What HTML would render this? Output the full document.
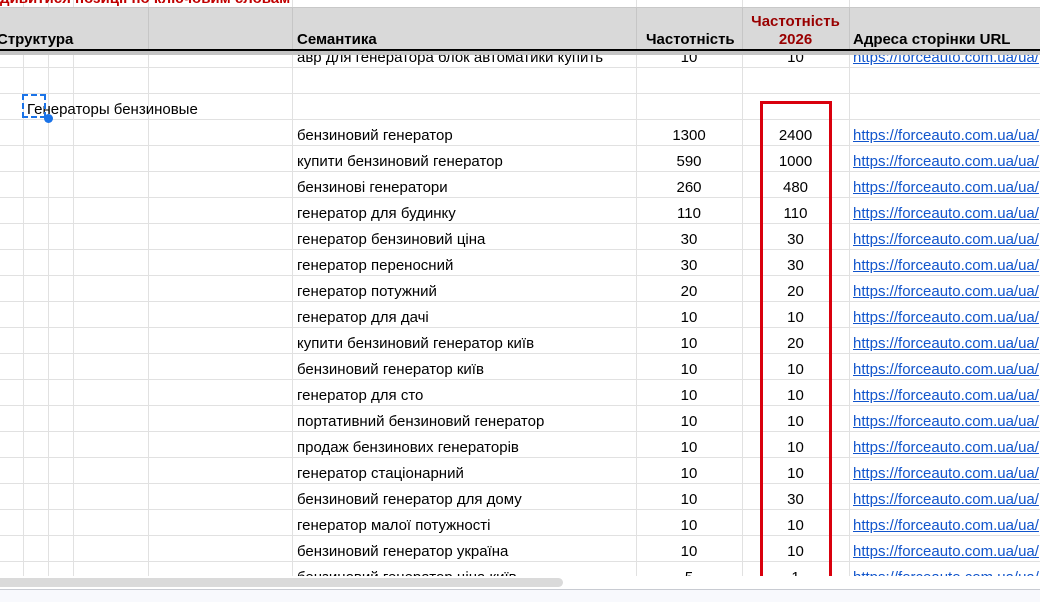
<!DOCTYPE html>
<html><head><meta charset="utf-8"><style>
body{margin:0;width:1040px;height:602px;overflow:hidden;background:#fff;font-family:"Liberation Sans",Arial,sans-serif;font-size:15px;color:#000;position:relative}
.v{position:absolute;top:0;width:1px;height:576px;background:#e1e1e1}
.r{position:absolute;left:0;width:1040px;height:26px;border-bottom:1px solid #e1e1e1;box-sizing:border-box}
.r span{position:absolute;top:7px;white-space:nowrap}
.s{left:297px}.f{left:636px;width:106px;text-align:center}.g{left:742px;width:107px;text-align:center}.u{left:853px;color:#1155cc;text-decoration:underline}
#hd{position:absolute;left:0;top:7px;width:1040px;height:42px;background:#d9d9d9;border-top:1px solid #c8c8c8}
#hd b{position:absolute;top:23px;white-space:nowrap;font-size:15px}
</style></head><body>
<div class="v" style="left:23px"></div><div class="v" style="left:48px"></div><div class="v" style="left:73px"></div><div class="v" style="left:148px"></div><div class="v" style="left:292px"></div><div class="v" style="left:636px"></div><div class="v" style="left:742px"></div><div class="v" style="left:849px"></div>

<div class="r" style="top:42px"><span class="s" style="top:7px">авр для генератора блок автоматики купить</span><span class="f" style="top:7px">10</span><span class="g" style="top:7px">10</span><span class="u" style="top:7px">https://forceauto.com.ua/ua/</span></div>
<div class="r" style="top:68px"></div>
<div class="r" style="top:94px"><span style="left:27px">Генераторы бензиновые</span></div>
<div class="r" style="top:120px"><span class="s">бензиновий генератор</span><span class="f">1300</span><span class="g">2400</span><span class="u">https://forceauto.com.ua/ua/</span></div>
<div class="r" style="top:146px"><span class="s">купити бензиновий генератор</span><span class="f">590</span><span class="g">1000</span><span class="u">https://forceauto.com.ua/ua/</span></div>
<div class="r" style="top:172px"><span class="s">бензинові генератори</span><span class="f">260</span><span class="g">480</span><span class="u">https://forceauto.com.ua/ua/</span></div>
<div class="r" style="top:198px"><span class="s">генератор для будинку</span><span class="f">110</span><span class="g">110</span><span class="u">https://forceauto.com.ua/ua/</span></div>
<div class="r" style="top:224px"><span class="s">генератор бензиновий ціна</span><span class="f">30</span><span class="g">30</span><span class="u">https://forceauto.com.ua/ua/</span></div>
<div class="r" style="top:250px"><span class="s">генератор переносний</span><span class="f">30</span><span class="g">30</span><span class="u">https://forceauto.com.ua/ua/</span></div>
<div class="r" style="top:276px"><span class="s">генератор потужний</span><span class="f">20</span><span class="g">20</span><span class="u">https://forceauto.com.ua/ua/</span></div>
<div class="r" style="top:302px"><span class="s">генератор для дачі</span><span class="f">10</span><span class="g">10</span><span class="u">https://forceauto.com.ua/ua/</span></div>
<div class="r" style="top:328px"><span class="s">купити бензиновий генератор київ</span><span class="f">10</span><span class="g">20</span><span class="u">https://forceauto.com.ua/ua/</span></div>
<div class="r" style="top:354px"><span class="s">бензиновий генератор київ</span><span class="f">10</span><span class="g">10</span><span class="u">https://forceauto.com.ua/ua/</span></div>
<div class="r" style="top:380px"><span class="s">генератор для сто</span><span class="f">10</span><span class="g">10</span><span class="u">https://forceauto.com.ua/ua/</span></div>
<div class="r" style="top:406px"><span class="s">портативний бензиновий генератор</span><span class="f">10</span><span class="g">10</span><span class="u">https://forceauto.com.ua/ua/</span></div>
<div class="r" style="top:432px"><span class="s">продаж бензинових генераторів</span><span class="f">10</span><span class="g">10</span><span class="u">https://forceauto.com.ua/ua/</span></div>
<div class="r" style="top:458px"><span class="s">генератор стаціонарний</span><span class="f">10</span><span class="g">10</span><span class="u">https://forceauto.com.ua/ua/</span></div>
<div class="r" style="top:484px"><span class="s">бензиновий генератор для дому</span><span class="f">10</span><span class="g">30</span><span class="u">https://forceauto.com.ua/ua/</span></div>
<div class="r" style="top:510px"><span class="s">генератор малої потужності</span><span class="f">10</span><span class="g">10</span><span class="u">https://forceauto.com.ua/ua/</span></div>
<div class="r" style="top:536px"><span class="s">бензиновий генератор україна</span><span class="f">10</span><span class="g">10</span><span class="u">https://forceauto.com.ua/ua/</span></div>
<div class="r" style="top:562px;height:14px;overflow:hidden;border:0"><span class="s">бензиновий генератор ціна київ</span><span class="f">5</span><span class="g">1</span><span class="u">https://forceauto.com.ua/ua/</span></div>

<div style="position:absolute;left:0;top:-10px;font-weight:bold;color:#c00000;font-size:15px;white-space:nowrap">дивитися позиції по ключовим словам</div>
<div style="position:absolute;left:0;top:7px;width:1040px;height:1px;background:#c8c8c8"></div>
<div id="hd">
<b style="left:-3px">Структура</b>
<b style="left:297px">Семантика</b>
<b style="left:646px">Частотність</b>
<b style="left:742px;width:107px;text-align:center;top:5px;color:#990000;line-height:18px">Частотність<br>2026</b>
<b style="left:853px">Адреса сторінки URL</b>
<div style="position:absolute;left:148px;top:0;width:1px;height:42px;background:#c6c6c6"></div>
<div style="position:absolute;left:292px;top:0;width:1px;height:42px;background:#c6c6c6"></div>
<div style="position:absolute;left:636px;top:0;width:1px;height:42px;background:#c6c6c6"></div>
<div style="position:absolute;left:742px;top:0;width:1px;height:42px;background:#c6c6c6"></div>
<div style="position:absolute;left:849px;top:0;width:1px;height:42px;background:#c6c6c6"></div>
</div>
<div style="position:absolute;left:0;top:49px;width:1040px;height:2px;background:#000"></div>
<div style="position:absolute;left:0;top:51px;width:1040px;height:4px;background:#c4c4c4"></div>

<div style="position:absolute;left:22px;top:94px;width:24px;height:24px;border:2px dashed #1a73e8;box-sizing:border-box"></div>
<div style="position:absolute;left:44px;top:114px;width:9px;height:9px;border-radius:50%;background:#1a73e8"></div>

<div style="position:absolute;left:760px;top:101px;width:72px;height:478px;border:3px solid #d9000d;box-sizing:border-box"></div>

<div style="position:absolute;left:0;top:576px;width:1040px;height:14px;background:#fff"></div>
<div style="position:absolute;left:0;top:578px;width:563px;height:9px;background:#dadada;border-radius:0 5px 5px 0"></div>
<div style="position:absolute;left:0;top:589px;width:1040px;height:1px;background:#c8cbd2"></div>
<div style="position:absolute;left:0;top:590px;width:1040px;height:12px;background:#f8f9fd"></div>
</body></html>
